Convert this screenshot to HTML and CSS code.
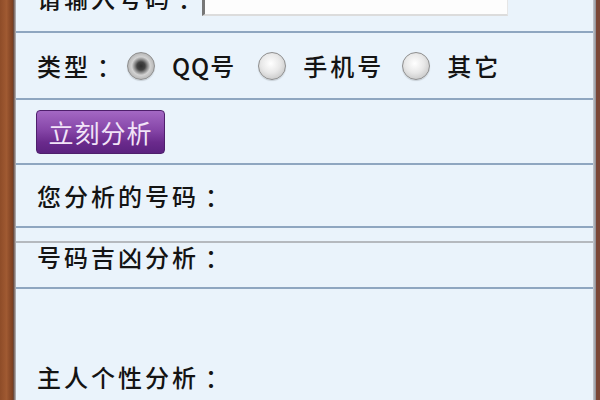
FILE: index.html
```html
<!DOCTYPE html>
<html lang="zh-CN">
<head>
<meta charset="utf-8">
<title>号码吉凶分析</title>
<link rel="stylesheet" href="styles.css">
</head>
<body>
<div class="frame">
  <div class="wood wood-left"></div>
  <div class="edge edge-left"></div>
  <div class="panel">
    <div class="row row-input">
      <span class="label">请输入号码<span class="colon">：</span></span>
      <div class="textbox"></div>
    </div>
    <div class="row row-type">
      <span class="label">类型<span class="colon">：</span></span>
      <span class="radio checked first"></span>
      <span class="opt opt-qq">QQ号</span>
      <span class="radio"></span>
      <span class="opt">手机号</span>
      <span class="radio"></span>
      <span class="opt">其它</span>
    </div>
    <div class="row row-btn">
      <div class="btn">立刻分析</div>
    </div>
    <div class="row row-num">
      <span class="label">您分析的号码<span class="colon">：</span></span>
    </div>
    <div class="row row-gap"></div>
    <div class="row row-luck">
      <span class="label">号码吉凶分析<span class="colon">：</span></span>
    </div>
    <div class="row row-person">
      <span class="label">主人个性分析<span class="colon">：</span></span>
    </div>
  </div>
  <div class="edge edge-right"></div>
  <div class="wood wood-right"></div>
</div>
</body>
</html>
```

FILE: styles.css
```css
html, body {
  margin: 0;
  padding: 0;
  width: 600px;
  height: 400px;
  overflow: hidden;
  background: #7d4427;
}

.frame {
  display: flex;
  width: 600px;
  height: 400px;
  font-family: "Noto Sans CJK SC", sans-serif;
  color: #141414;
}

.wood-left {
  width: 13px;
  background: linear-gradient(90deg, #8e4c28, #a05a32 50%, #7a3e20);
}

.edge-left {
  width: 3px;
  background: linear-gradient(90deg, #5a3424, #b8bcc2);
}

.edge-right {
  width: 3px;
  background: linear-gradient(90deg, #c6cbd2, #8a8a90);
}

.wood-right {
  width: 4px;
  background: #7a4636;
}

.panel {
  flex: 1;
  background: #eaf3fb;
  display: flex;
  flex-direction: column;
  margin-top: -28px;
}

.row {
  display: flex;
  align-items: center;
  border-bottom: 2px solid #8fa6c0;
  padding-left: 21px;
  flex-shrink: 0;
}

.label, .opt {
  font-size: 24px;
  font-weight: 500;
  letter-spacing: 3px;
  line-height: 28px;
  white-space: nowrap;
}

.colon {
  display: inline-block;
  margin-left: 6px;
  margin-right: -6px;
}

.opt-qq {
  letter-spacing: 1px;
  margin-right: 5px;
}

.row-input {
  height: 59px;
  align-items: flex-start;
}

.row-input .label {
  margin-top: 12px;
}

.textbox {
  margin-left: 3px;
  width: 302px;
  height: 42px;
  background: #fdfdfd;
  border-left: 3px solid #777;
  border-bottom: 2px solid #dcdcdc;
  border-right: 1px solid #e6e6e6;
}

.row-type {
  height: 65px;
}

.radio {
  width: 26px;
  height: 26px;
  border-radius: 50%;
  border: 1px solid #8e8e8e;
  background: radial-gradient(circle at 45% 40%, #ffffff 0%, #e8e8e8 45%, #c8c8c8 80%, #a8a8a8 100%);
  margin-left: 18px;
  margin-right: 17px;
  flex-shrink: 0;
  box-shadow: 0 1px 1px rgba(0, 0, 0, 0.15);
}

.radio.first {
  margin-left: 9px;
}

.radio.checked {
  background: radial-gradient(circle, #2e2e2e 0%, #444 22%, #7a7a7a 32%, #d2d2d2 50%, #b0b0b0 78%, #8a8a8a 100%);
}

.row-btn {
  height: 63px;
}

.btn {
  width: 127px;
  height: 42px;
  border: 1px solid #4f1f6c;
  border-radius: 4px;
  background: linear-gradient(180deg, #a468c4 0%, #8646a8 45%, #6a2a8c 75%, #5c2280 100%);
  color: #f2e4f8;
  font-size: 25px;
  letter-spacing: 1px;
  display: flex;
  align-items: center;
  justify-content: center;
  margin-left: -1px;
}

.row-num {
  height: 61px;
}

.row-gap {
  height: 13px;
  border-bottom-color: #b5b9be;
}

.row-luck {
  height: 44px;
  align-items: flex-start;
}

.row-person {
  flex: 1;
  align-items: flex-start;
  border-bottom: none;
  padding-top: 74px;
}
```
